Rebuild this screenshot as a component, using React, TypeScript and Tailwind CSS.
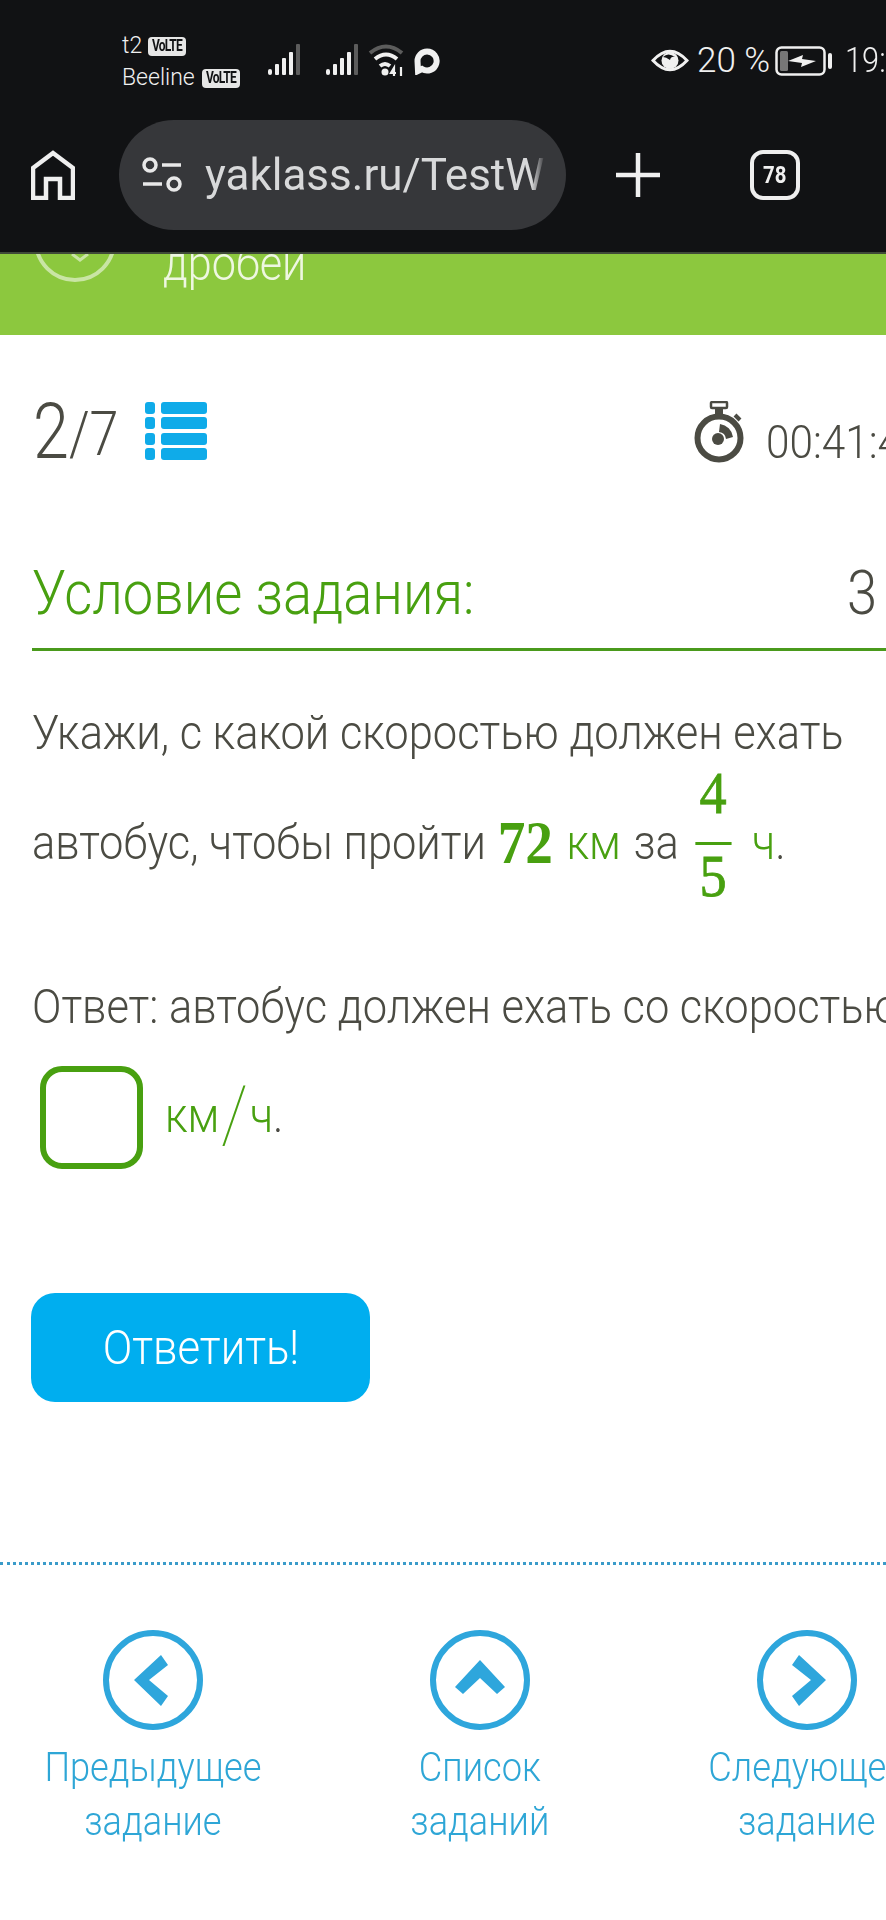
const SignalBars = () => (
    <svg className="shrink-0" width="32" height="32" viewBox="0 0 32 32" fill="#f0f0f0">
        <rect x="0" y="25" width="4" height="6" rx="2" />
        <rect x="7" y="20" width="4" height="11" rx="1" />
        <rect x="14" y="14" width="4" height="17" rx="1" />
        <rect x="21" y="8" width="4" height="23" rx="1" />
        <rect x="28" y="0" width="4" height="31" rx="1" fill="#5c5c5c" />
    </svg>
);

const Volte = () => (
    <span className="flex h-[19px] w-[38px] items-center justify-center overflow-hidden rounded-[4px] bg-[#e6e6e6] text-[#111214]">
        <span className="inline-block scale-x-[0.75] text-[16px] font-bold tracking-[-1px]">VoLTE</span>
    </span>
);

const CHEVRONS = {
    left: '31,50 58,25 65,35 46,50 65,66 58,76',
    up: '50,30 75,57 67,64 50,48 33,64 25,57',
    right: '69,50 42,25 35,35 54,50 35,66 42,76',
};

const NavLink = ({ dir, line1, line2 }: { dir: 'left' | 'up' | 'right'; line1: string; line2: string }) => (
    <div className="flex w-[300px] shrink-0 flex-col items-center">
        <svg className="shrink-0" width="100" height="100" viewBox="0 0 100 100" fill="none">
            <circle cx="50" cy="50" r="47" stroke="#2ea6dc" strokeWidth="6" />
            <polygon points={CHEVRONS[dir]} fill="#2ea6dc" />
        </svg>
        <div className="mt-[11px] scale-x-[0.905] text-center text-[40px] leading-[54px] font-light whitespace-nowrap text-[#2ea6d6]">
            {line1}
            <br />
            {line2}
        </div>
    </div>
);

export default function App() {
    return (
        <div className="h-[1920px] w-[886px] overflow-hidden bg-white font-['Roboto',sans-serif] text-[#4b4b43]">
            {/* Browser chrome */}
            <div className="h-[254px] border-b-2 border-[#3f4a38] bg-[#111214] text-[#f0f0f0]">
                <div className="flex h-[120px] items-start pt-[30px] whitespace-nowrap">
                    <div className="ml-[122px] w-[146px] shrink-0 text-[23px] leading-[32px] font-light">
                        <div className="flex items-center gap-[6px]">
                            t2
                            <Volte />
                        </div>
                        <div className="flex items-center gap-[7px]">
                            Beeline
                            <Volte />
                        </div>
                    </div>
                    <div className="mt-[14px] flex shrink-0 items-center gap-[26px]">
                        <SignalBars />
                        <SignalBars />
                    </div>
                    <svg className="mt-[14px] ml-[10px] shrink-0" width="36" height="32" viewBox="0 0 36 32" fill="none" stroke="#f0f0f0" strokeWidth="4">
                        <path d="M2 9 Q18 -4 34 9" stroke="#5c5c5c" />
                        <path d="M7 15 Q18 6 29 15" />
                        <path d="M12 22 Q17 18 22 22" />
                        <circle cx="17" cy="28" r="3.5" fill="#f0f0f0" stroke="none" />
                        <path d="M26 32 V24 L23 29 H28 M33 23 V32" strokeWidth="2.2" />
                    </svg>
                    <svg className="mt-[18px] ml-[10px] shrink-0" width="26" height="27" viewBox="0 0 26 27" fill="none">
                        <path d="M13 3.5 A9.5 9.5 0 1 1 8 21 L4 23 L3.5 13 A9.5 9.5 0 0 1 13 3.5 Z" stroke="#f0f0f0" strokeWidth="6" />
                    </svg>
                    <svg className="mt-[18px] ml-[211px] shrink-0" width="38" height="25" viewBox="0 0 38 25">
                        <path d="M2 12.5 Q19 -6 36 12.5 Q19 31 2 12.5 Z" fill="none" stroke="#f0f0f0" strokeWidth="3" />
                        <circle cx="19" cy="12.5" r="8.5" fill="#f0f0f0" />
                        <path d="M12 9 Q17 4 24 9 Q20 8 19 12 Q15 9 12 9 Z" fill="#111214" />
                    </svg>
                    <span className="mt-[9px] ml-[8px] shrink-0 text-[35px] leading-[44px] font-light">20 %</span>
                    <svg className="mt-[16px] ml-[5px] shrink-0" width="58" height="30" viewBox="0 0 58 30" fill="none">
                        <rect x="1.5" y="1.5" width="48" height="27" rx="5" stroke="#f0f0f0" strokeWidth="2.5" />
                        <rect x="5" y="5" width="8" height="20" rx="1.5" fill="#777" />
                        <path d="M13 15 L28 9 L27 13 L41 15 L26 21 L27 17 Z" fill="#f0f0f0" />
                        <rect x="53" y="7" width="4" height="16" rx="2" fill="#f0f0f0" />
                    </svg>
                    <span className="mt-[9px] ml-[12px] shrink-0 origin-left scale-x-[0.88] text-[35px] leading-[44px] font-light">19:</span>
                </div>
                <div className="flex items-center">
                    <svg className="ml-[31px] shrink-0" width="44" height="50" viewBox="0 0 44 50" fill="none" stroke="#efefef" strokeWidth="4.5">
                        <path d="M2 48 V18 L22 3 L42 18 V48 H29 V29 H15 V48 Z" />
                    </svg>
                    <div className="ml-[44px] flex h-[110px] w-[447px] shrink-0 items-center rounded-[55px] bg-[#36373a] pr-[21px] pl-[23px]">
                        <svg className="shrink-0" width="40" height="36" viewBox="0 0 40 36" fill="none" stroke="#e8e8e8" strokeWidth="3.5">
                            <circle cx="8" cy="8" r="6" />
                            <path d="M20 8 H39 M1 27 H20" />
                            <circle cx="32" cy="27" r="6" />
                        </svg>
                        <span className="ml-[23px] overflow-hidden text-[44px] leading-[60px] whitespace-nowrap text-[#d8d9da] [mask-image:linear-gradient(to_right,black_96%,transparent)]">yaklass.ru/TestWork</span>
                    </div>
                    <svg className="ml-[50px] shrink-0" width="44" height="44" viewBox="0 0 44 44" stroke="#f0f0f0" strokeWidth="4.5">
                        <path d="M22 0 V44 M0 22 H44" />
                    </svg>
                    <div className="ml-[90px] flex h-[50px] w-[50px] shrink-0 items-center justify-center rounded-[13px] border-[4px] border-[#eeeeee] text-[24px] font-bold">
                        <span className="inline-block scale-x-[0.85]">78</span>
                    </div>
                </div>
            </div>

            {/* Section header, scrolled under the address bar */}
            <div className="relative h-[81px] overflow-hidden bg-[#8cc83e] text-[#eef7e1]">
                <div className="absolute top-[-54px] left-[34px] size-[82px] rounded-full border-[4px] border-[#c9e5a4]" />
                <svg className="absolute top-0 left-[70px]" width="20" height="8" viewBox="0 0 20 8" fill="none" stroke="#c9e5a4" strokeWidth="3">
                    <path d="M2 0 L10 6 L18 0" />
                </svg>
                <div className="absolute top-[-20px] left-[163px] origin-left scale-x-[0.9] text-[48px] leading-[60px] font-light">дробей</div>
            </div>

            {/* Progress and timer */}
            <div className="mt-[62px] flex h-[70px] items-end pl-[33px] whitespace-nowrap">
                <div className="flex w-[112px] shrink-0 origin-left scale-x-[0.84] items-end">
                    <span className="text-[77px] leading-[70px] font-light">2</span>
                    <span className="text-[62px] leading-[66px] font-light">/7</span>
                </div>
                <svg className="mb-[7px] shrink-0" width="62" height="58" viewBox="0 0 62 58" fill="#0fabe9">
                    <rect x="0" y="0" width="10" height="12" rx="3" />
                    <rect x="16" y="0" width="46" height="12" rx="3" />
                    <rect x="0" y="15" width="10" height="12" rx="3" />
                    <rect x="16" y="15" width="46" height="12" rx="3" />
                    <rect x="0" y="31" width="10" height="12" rx="3" />
                    <rect x="16" y="31" width="46" height="12" rx="3" />
                    <rect x="0" y="46" width="10" height="12" rx="3" />
                    <rect x="16" y="46" width="46" height="12" rx="3" />
                </svg>
                <svg className="mb-[4px] ml-[487px] shrink-0" width="50" height="62" viewBox="0 0 50 62" fill="none">
                    <rect x="17" y="1" width="16" height="6" rx="1" stroke="#4b4b43" strokeWidth="2.5" />
                    <rect x="21" y="7" width="8" height="7" fill="#4b4b43" />
                    <circle cx="25" cy="37" r="21.5" stroke="#4b4b43" strokeWidth="6" />
                    <circle cx="24" cy="38" r="6" fill="#4b4b43" />
                    <path d="M26 23 A15 15 0 0 1 39 36 L32 38 A8 8 0 0 0 25 31 Z" fill="#4b4b43" />
                    <path d="M41 14 L46 19" stroke="#4b4b43" strokeWidth="4" />
                </svg>
                <span className="ml-[22px] shrink-0 origin-left scale-x-[0.9] text-[47px] leading-[50px] font-light">00:41:47</span>
            </div>

            {/* Task */}
            <div className="mt-[89px] ml-[32px] flex h-[95px] items-start justify-between border-b-[3px] border-[#4a9a1c] whitespace-nowrap">
                <span className="origin-left scale-x-[0.89] text-[61px] leading-[74px] font-light text-[#48a010]">Условие задания:</span>
                <span className="w-[39px] shrink-0 origin-left scale-x-[0.89] text-[61px] leading-[74px] font-light">3</span>
            </div>
            <div className="mt-[44px] ml-[32px] text-[48px] font-light whitespace-nowrap">
                <div className="origin-left scale-x-[0.905] leading-[76px]">Укажи, с какой скоростью должен ехать</div>
                <div className="flex h-[150px] origin-left scale-x-[0.905] items-center">
                    <span className="pb-[6px]">автобус, чтобы пройти</span>
                    <span className="ml-[13px] pb-[6px] font-['Liberation_Serif',serif] text-[61px] leading-[68px] font-bold text-[#48a010]">72</span>
                    <span className="ml-[15px] pb-[6px] text-[#48a010]">км</span>
                    <span className="ml-[14px] pb-[6px]">за</span>
                    <span className="mb-[6px] ml-[18px] flex w-[40px] flex-col items-center font-['Liberation_Serif',serif] text-[60px] leading-[62px] text-[#48a010] [-webkit-text-stroke:0.8px_#48a010]">
                        <span className="flex h-[75px] items-end pb-[18px]">4</span>
                        <span className="h-[3px] w-full bg-[#48a010]" />
                        <span className="flex h-[75px] items-start">5</span>
                    </span>
                    <span className="ml-[23px] pb-[6px]">
                        <span className="text-[#48a010]">ч</span>.
                    </span>
                </div>
                <div className="mt-[56px] origin-left scale-x-[0.905] leading-[60px]">Ответ: автобус должен ехать со скоростью</div>
                <div className="mt-[29px] flex h-[103px] items-center">
                    <div className="ml-[8px] h-[103px] w-[103px] shrink-0 rounded-[22px] border-[6px] border-[#48a010]" />
                    <span className="ml-[22px] origin-left scale-x-[0.905] pb-[4px] leading-[60px]">
                        <span className="text-[#48a010]">
                            км
                            <span className="mx-[2px] align-[-9px] text-[78px] leading-[50px] font-thin">/</span>ч
                        </span>
                        .
                    </span>
                </div>
            </div>

            <button className="mt-[124px] ml-[31px] block h-[109px] w-[339px] rounded-[24px] bg-[#00aeef] text-[48px] font-light text-white">
                <span className="inline-block scale-x-[0.91]">Ответить!</span>
            </button>

            {/* Bottom navigation */}
            <div className="mt-[160px] border-t-[3px] border-dotted border-[#3a9bc9]" />
            <div className="mt-[65px] ml-[3px] flex gap-[27px]">
                <NavLink dir="left" line1="Предыдущее" line2="задание" />
                <NavLink dir="up" line1="Список" line2="заданий" />
                <NavLink dir="right" line1="Следующее" line2="задание" />
            </div>
        </div>
    );
}
